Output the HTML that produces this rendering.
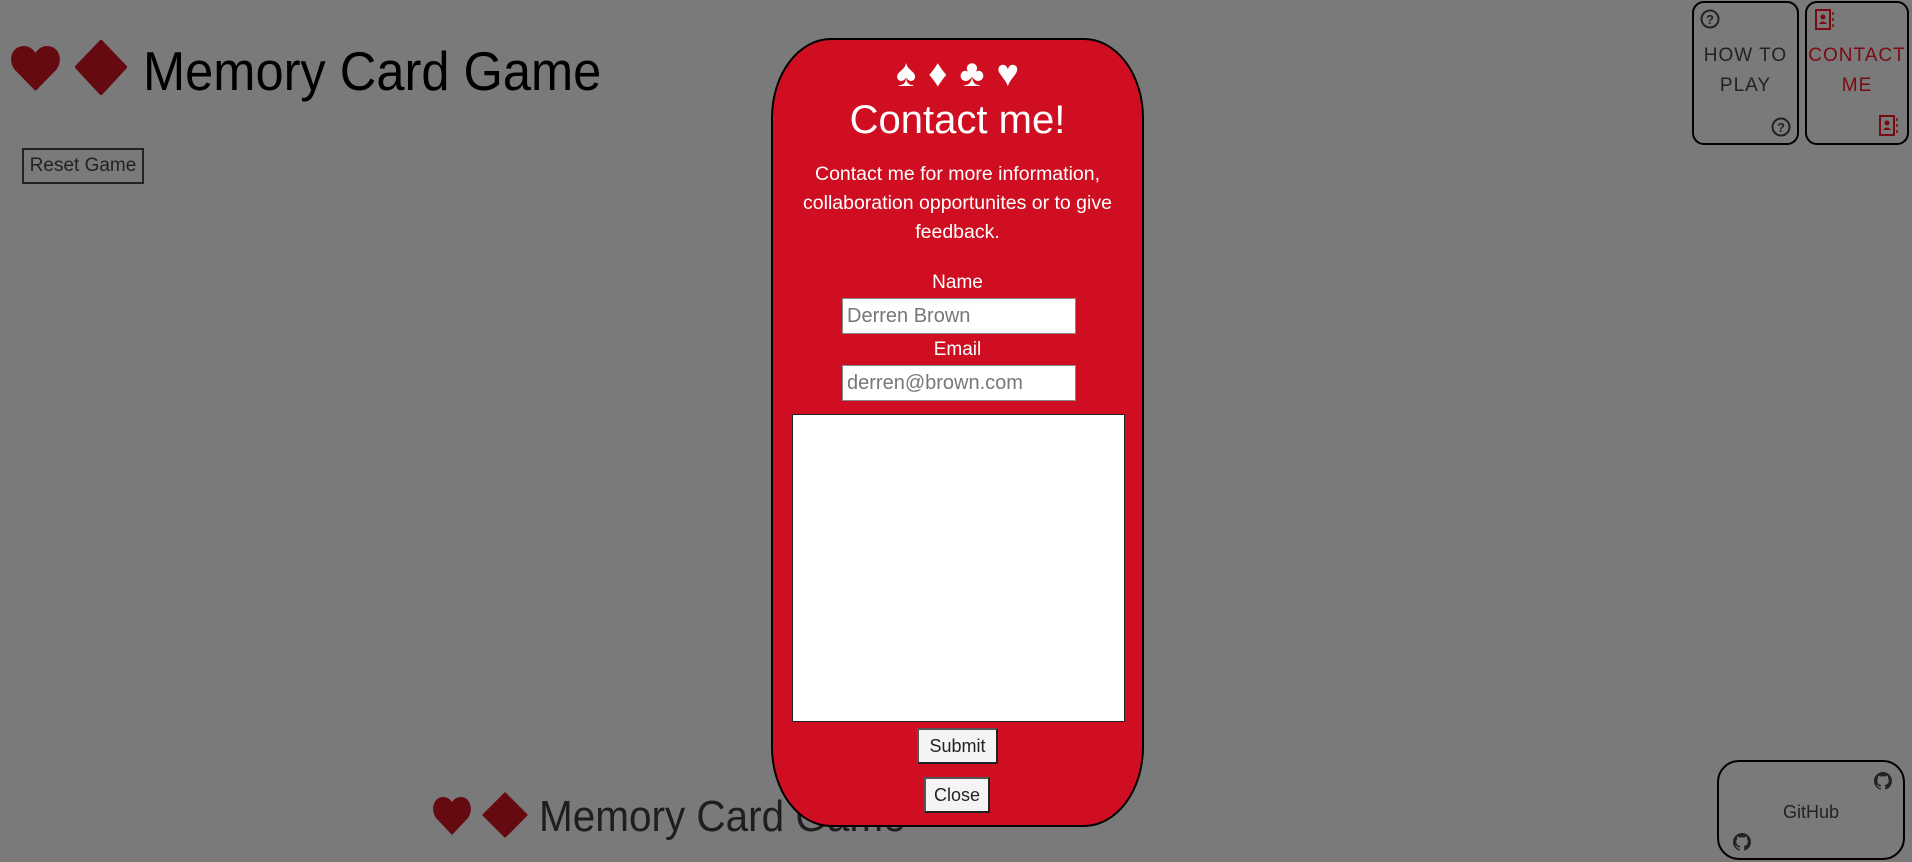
<!DOCTYPE html>
<html><head><meta charset="utf-8"><style>
*{margin:0;padding:0;box-sizing:border-box}
body{width:1912px;height:862px;background:#7a7a7a;position:relative;overflow:hidden;font-family:"Liberation Sans",sans-serif}
.abs{position:absolute}
.title{color:#000;white-space:nowrap;transform-origin:0 0;line-height:1}
.btn{position:absolute;background:#f4f4f4;border:2px solid #222;border-top-color:#555;border-left-color:#555;font-size:18px;color:#222;display:flex;align-items:center;justify-content:center;white-space:nowrap}
.card{position:absolute;border:2px solid #000;border-radius:12px}
.modal{position:absolute;left:771px;top:38px;width:373px;height:789px;background:#cf0f21;border:2px solid #000;border-radius:60px/80px;color:#fff;text-align:center}
.inp{position:absolute;left:69px;width:234px;height:36px;background:#fff;border:1px solid #888;color:#777;font-size:20px;text-align:left;padding-left:4px;line-height:34px}
</style></head><body>
<svg class="abs" style="left:10px;top:40px" width="118" height="55" viewBox="0 0 118 55">
<path d="M25.5 51 L5 30 C-3 20 2 6 14 6 C19 6 23 9 25.5 13 C28 9 32 6 37 6 C49 6 54 20 46 30 Z" fill="#650a10"/>
<path d="M91 2 L115 27 L91 53 L67 27 Z" fill="#650a10" stroke="#650a10" stroke-width="4" stroke-linejoin="round"/>
</svg>
<div class="abs title" style="left:143px;top:44px;font-size:55px;transform:scaleX(0.92)">Memory Card Game</div>
<div class="btn" style="left:22px;top:148px;width:122px;height:36px;background:#7a7a7a;border:2px solid #222;font-size:19px">Reset Game</div>

<svg class="abs" style="left:432px;top:792px" width="96" height="46" viewBox="0 0 96 46">
<path d="M20 43 L4 26 C-2 17 2 5 11 5 C15 5 18 7 20 10 C22 7 25 5 29 5 C38 5 42 17 36 26 Z" fill="#650a10"/>
<path d="M73 2 L94 23 L73 44 L52 23 Z" fill="#650a10" stroke="#650a10" stroke-width="3" stroke-linejoin="round"/>
</svg>
<div class="abs title" style="left:539px;top:795px;font-size:44px;color:#1e1e1e;transform:scaleX(0.92)">Memory Card Game</div>

<div class="card" style="left:1692px;top:1px;width:107px;height:144px">
<svg class="abs" style="left:6px;top:6px" width="20" height="20" viewBox="0 0 20 20"><circle cx="10" cy="10" r="8.5" fill="none" stroke="#222" stroke-width="2"/><text x="10" y="15" font-size="13" font-family="Liberation Sans" font-weight="bold" text-anchor="middle" fill="#222">?</text></svg>
<svg class="abs" style="right:6px;bottom:6px" width="20" height="20" viewBox="0 0 20 20"><circle cx="10" cy="10" r="8.5" fill="none" stroke="#222" stroke-width="2"/><text x="10" y="15" font-size="13" font-family="Liberation Sans" font-weight="bold" text-anchor="middle" fill="#222">?</text></svg>
<div class="abs" style="left:0;right:0;top:38px;text-align:center;font-size:19px;line-height:30px;color:#222;letter-spacing:1px">HOW TO<br>PLAY</div>
</div>
<div class="card" style="left:1805px;top:1px;width:104px;height:144px">
<svg class="abs" style="left:8px;top:6px" width="20" height="22" viewBox="0 0 20 22"><rect x="1" y="1" width="14" height="19" fill="none" stroke="#7a0a12" stroke-width="2"/><circle cx="8" cy="8" r="2.5" fill="#7a0a12"/><path d="M4 15 Q8 10 12 15 Z" fill="#7a0a12"/><path d="M18 3v3M18 9v3M18 15v3" stroke="#7a0a12" stroke-width="1.5"/></svg>
<svg class="abs" style="right:8px;bottom:6px" width="20" height="22" viewBox="0 0 20 22"><rect x="1" y="1" width="14" height="19" fill="none" stroke="#7a0a12" stroke-width="2"/><circle cx="8" cy="8" r="2.5" fill="#7a0a12"/><path d="M4 15 Q8 10 12 15 Z" fill="#7a0a12"/><path d="M18 3v3M18 9v3M18 15v3" stroke="#7a0a12" stroke-width="1.5"/></svg>
<div class="abs" style="left:-4px;right:-4px;top:38px;text-align:center;font-size:19px;line-height:30px;color:#7a0a12;letter-spacing:1px">CONTACT<br>ME</div>
</div>

<div class="card" style="left:1717px;top:760px;width:188px;height:100px;border-radius:22px">
<svg class="abs" style="left:155px;top:10px" width="18" height="18" viewBox="0 0 16 16"><path fill="#222" d="M8 0C3.58 0 0 3.58 0 8c0 3.54 2.29 6.53 5.47 7.59.4.07.55-.17.55-.38v-1.34c-2.23.48-2.7-1.07-2.7-1.07-.36-.92-.89-1.17-.89-1.17-.73-.5.06-.49.06-.49.8.06 1.23.83 1.23.83.71 1.22 1.870.87 2.33.66.07-.52.28-.87.5-1.07-1.78-.2-3.64-.89-3.64-3.95 0-.87.31-1.59.82-2.15-.08-.2-.36-1.02.08-2.12 0 0 .67-.21 2.2.82A7.7 7.7 0 0 1 8 3.8c.68 0 1.36.09 2 .27 1.53-1.04 2.2-.82 2.2-.82.44 1.1.16 1.92.08 2.12.51.56.82 1.27.82 2.15 0 3.07-1.87 3.75-3.65 3.95.29.25.54.73.54 1.48v2.2c0 .21.15.46.55.38A8 8 0 0 0 16 8c0-4.42-3.58-8-8-8z"/></svg>
<svg class="abs" style="left:14px;top:71px" width="18" height="18" viewBox="0 0 16 16"><path fill="#222" d="M8 0C3.58 0 0 3.58 0 8c0 3.54 2.29 6.53 5.47 7.59.4.07.55-.17.55-.38v-1.34c-2.23.48-2.7-1.07-2.7-1.07-.36-.92-.89-1.17-.89-1.17-.73-.5.06-.49.06-.49.8.06 1.23.83 1.23.83.71 1.22 1.87.87 2.33.66.07-.52.28-.87.5-1.07-1.78-.2-3.64-.89-3.64-3.95 0-.87.31-1.59.82-2.15-.08-.2-.36-1.02.08-2.12 0 0 .67-.21 2.2.82A7.7 7.7 0 0 1 8 3.8c.68 0 1.36.09 2 .27 1.53-1.04 2.2-.82 2.2-.82.44 1.1.16 1.92.08 2.12.51.56.82 1.27.82 2.15 0 3.07-1.87 3.75-3.65 3.95.29.25.54.73.54 1.48v2.2c0 .21.15.46.55.38A8 8 0 0 0 16 8c0-4.42-3.58-8-8-8z"/></svg>
<div class="abs" style="left:0;right:0;top:40px;text-align:center;font-size:18px;color:#222">GitHub</div>
</div>

<div class="modal">
<div class="abs" style="left:0;right:0;top:14px;font-size:38px;line-height:40px;letter-spacing:12px;padding-left:12px">♠♦♣♥</div>
<div class="abs" style="left:0;right:0;top:58px;font-size:40px;line-height:44px">Contact me!</div>
<div class="abs" style="left:12px;right:12px;top:120px;font-size:19.5px;line-height:29px">Contact me for more information, collaboration opportunites or to give feedback.</div>
<div class="abs" style="left:0;right:0;top:232px;font-size:19px">Name</div>
<div class="inp" style="top:258px">Derren Brown</div>
<div class="abs" style="left:0;right:0;top:299px;font-size:19px">Email</div>
<div class="inp" style="top:325px">derren@brown.com</div>
<div class="abs" style="left:19px;top:374px;width:333px;height:308px;background:#fff;border:1px solid #222"></div>
<div class="btn" style="left:144px;top:688px;width:81px;height:36px">Submit</div>
<div class="btn" style="left:151px;top:737px;width:66px;height:36px">Close</div>
</div>
</body></html>
